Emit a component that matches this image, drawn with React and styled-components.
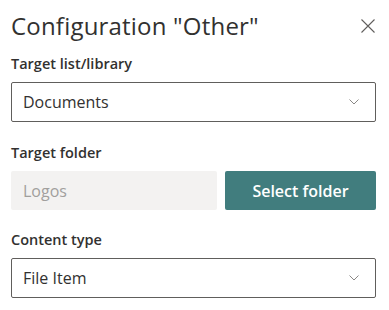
import React from "react";
import styled, { createGlobalStyle } from "styled-components";

const GlobalStyle = createGlobalStyle`
  body {
    margin: 0;
    background: #ffffff;
    font-family: "Open Sans", "Noto Sans", sans-serif;
    color: #323130;
  }
`;

const Panel = styled.div`
  width: 389px;
  height: 310px;
  box-sizing: border-box;
  padding: 8px 13px 0 11px;
  overflow: hidden;
`;

const Header = styled.div`
  display: flex;
  align-items: center;
  justify-content: space-between;
  height: 36px;
  margin-bottom: 10px;
`;

const Title = styled.h1`
  margin: 0;
  font-size: 24px;
  font-weight: 400;
  line-height: 36px;
  color: #323130;
  letter-spacing: 0.2px;
`;

const CloseButton = styled.button`
  width: 14px;
  height: 14px;
  padding: 0;
  margin-right: 1px;
  border: none;
  background: transparent;
  display: flex;
  align-items: center;
  justify-content: center;
`;

const Field = styled.div`
  margin-bottom: ${(p) => p.$gap || 20}px;
`;

const Label = styled.div`
  font-size: 14.5px;
  font-weight: 600;
  line-height: 20px;
  margin-bottom: 8px;
  color: #323130;
`;

const Dropdown = styled.div`
  height: 40px;
  box-sizing: border-box;
  border: 1px solid #605e5c;
  border-radius: 2px;
  display: flex;
  align-items: center;
  justify-content: space-between;
  padding: 0 16px 0 11px;
  font-size: 16px;
  color: #323130;
`;

const Row = styled.div`
  display: flex;
  gap: 8px;
`;

const ReadOnlyInput = styled.div`
  flex: 1;
  height: 39px;
  border-radius: 2px;
  background: #f3f2f1;
  display: flex;
  align-items: center;
  padding: 0 12px;
  font-size: 16px;
  color: #a19f9d;
`;

const PrimaryButton = styled.button`
  width: 151px;
  height: 39px;
  border: none;
  border-radius: 2px;
  background: #417d7e;
  color: #ffffff;
  font-family: inherit;
  font-size: 16px;
  font-weight: 600;
`;

const Chevron = () => (
  <svg width="10" height="6" viewBox="0 0 10 6">
    <path d="M0.5 0.5 L5 5 L9.5 0.5" fill="none" stroke="#8a8886" strokeWidth="1" />
  </svg>
);

export default function App() {
  return (
    <>
      <GlobalStyle />
      <Panel>
        <Header>
          <Title>Configuration "Other"</Title>
          <CloseButton aria-label="Close">
            <svg width="14" height="14" viewBox="0 0 14 14">
              <path d="M0.5 0.5 L13.5 13.5 M13.5 0.5 L0.5 13.5" stroke="#605e5c" strokeWidth="1.1" />
            </svg>
          </CloseButton>
        </Header>

        <Field $gap={21}>
          <Label>Target list/library</Label>
          <Dropdown>
            <span>Documents</span>
            <Chevron />
          </Dropdown>
        </Field>

        <Field $gap={20}>
          <Label>Target folder</Label>
          <Row>
            <ReadOnlyInput>Logos</ReadOnlyInput>
            <PrimaryButton>Select folder</PrimaryButton>
          </Row>
        </Field>

        <Field>
          <Label>Content type</Label>
          <Dropdown>
            <span>File Item</span>
            <Chevron />
          </Dropdown>
        </Field>
      </Panel>
    </>
  );
}
